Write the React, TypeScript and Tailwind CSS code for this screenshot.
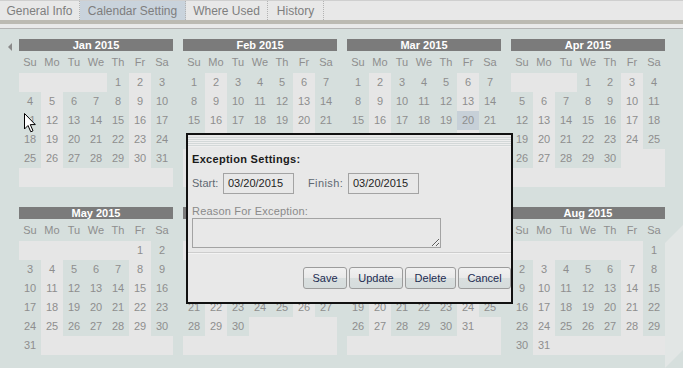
import React from "react";

const MONTHS = ["Jan", "Feb", "Mar", "Apr", "May", "Jun", "Jul", "Aug"];
const DAY_NAMES = ["Su", "Mo", "Tu", "We", "Th", "Fr", "Sa"];
const TABS = [
  { label: "General Info", w: "w-[80px]", active: false },
  { label: "Calendar Setting", w: "w-[106px]", active: true },
  { label: "Where Used", w: "w-[82px]", active: false },
  { label: "History", w: "w-[56px]", active: false },
];

function Month({ m }: { m: number }) {
  const first = new Date(2015, m, 1).getDay();
  const days = new Date(2015, m + 1, 0).getDate();
  // always 6 rows of 7
  const cells = Array.from({ length: 42 }, (_, i) => {
    const d = i - first + 1;
    return d >= 1 && d <= days ? d : null;
  });

  return (
    <div className="w-[154px]">
      <div className="h-[12px] bg-[#7b7b7b] text-center text-[11px] font-bold leading-[12px] text-white">
        {MONTHS[m]} 2015
      </div>
      <div className="grid h-[22px] grid-cols-7 text-center text-[11px] leading-[22px] text-[#8e8e8e]">
        {DAY_NAMES.map((n) => (
          <div key={n}>{n}</div>
        ))}
      </div>
      <div className="grid grid-cols-7">
        {cells.map((d, i) => {
          const col = i % 7;
          const selected = m === 2 && d === 20;
          let bg = "";
          if (selected) bg = "bg-[#c7d0d8]";
          else if (d === null || col === 1 || col === 5) bg = "bg-[#e6e6e6]";
          return (
            <div
              key={i}
              className={`h-[19px] text-center text-[11px] leading-[19px] text-[#8e8e8e] ${bg}`}
            >
              {d ?? ""}
            </div>
          );
        })}
      </div>
    </div>
  );
}

function Btn({ label, w }: { label: string; w: string }) {
  return (
    <button
      type="button"
      className={`${w} h-[22px] rounded-[3px] border border-[#9c9c9c] bg-[linear-gradient(to_bottom,#f1f1f1_0%,#e9e9e9_50%,#d9dfdf_51%,#d6dcdc_100%)] text-center text-[11px] leading-[20px] text-[#1d2c52]`}
    >
      {label}
    </button>
  );
}

export default function App(): JSX.Element {
  return (
    <div className="relative h-[368px] w-[683px] overflow-hidden bg-[#d6dfdd] font-['Liberation_Sans',Arial,sans-serif]">
      {/* faded watermark shape, bottom right */}
      <svg
        className="absolute left-[665px] top-[225px]"
        width="18"
        height="143"
        viewBox="0 0 18 143"
      >
        <polygon points="0,18 18,0 18,125 0,143" fill="#e2e6e5" />
      </svg>

      {/* tabs */}
      <div className="flex h-[20px] border-t border-[#cfcfcf] bg-[#e8e8e8]">
        {TABS.map((t) => (
          <div
            key={t.label}
            className={`${t.w} flex h-full items-center justify-center border-r border-dotted border-[#b3b3b3] text-[12px] text-[#7e7e7e] ${
              t.active ? "bg-[#c9d3dc]" : ""
            }`}
          >
            {t.label}
          </div>
        ))}
      </div>
      <div className="h-[4px] bg-[#bcbab2]" />
      <div className="h-[4px] bg-[#e9e9e9]" />
      <div className="h-[1px] bg-[#b4b4b4]" />

      {/* calendars */}
      <div className="relative flex pt-[10px]">
        <div className="w-[19px]">
          <div className="ml-[8px] mt-[4px] h-0 w-0 border-y-[4px] border-r-[4px] border-y-transparent border-r-[#8a8a8a]" />
        </div>
        <div className="grid grid-cols-[repeat(4,154px)] gap-x-[10px] gap-y-[20px]">
          {MONTHS.map((_, m) => (
            <Month key={m} m={m} />
          ))}
        </div>
      </div>

      {/* exception dialog */}
      <div className="absolute left-[186px] top-[133px] flex h-[171px] w-[327px] flex-col border-2 border-[#111] bg-[#e8e8e8]">
        <div className="mt-[2px] h-[10px] bg-[repeating-linear-gradient(to_bottom,#d3d8d8_0px,#d3d8d8_1px,#eeeeee_1px,#eeeeee_2px)]" />
        <div className="mt-[5px] pl-[4px] text-[11px] font-bold leading-[14px] tracking-[0.3px] text-[#1b1b1b]">
          Exception Settings:
        </div>
        <div className="mt-[7px] flex h-[21px] items-center pl-[4px] text-[11px]">
          <span className="w-[31px] text-[#5f6872]">Start:</span>
          <div className="h-[21px] w-[71px] border border-[#a3a3a3] pl-[4px] leading-[19px] text-[#1e1e1e]">
            03/20/2015
          </div>
          <span className="ml-[14px] w-[40px] tracking-[0.4px] text-[#5f6872]">Finish:</span>
          <div className="h-[21px] w-[71px] border border-[#a3a3a3] pl-[4px] leading-[19px] text-[#1e1e1e]">
            03/20/2015
          </div>
        </div>
        <div className="mt-[11px] pl-[4px] text-[11px] leading-[13px] tracking-[0.2px] text-[#8a8a8a]">
          Reason For Exception:
        </div>
        <div className="pl-[4px]">
          <textarea className="block h-[30px] w-[249px] border border-[#a3a3a3] bg-[#e8e8e8] outline-none" />
        </div>
        <div className="mt-[4px] h-[1px] bg-[#cdcdcd]" />
        <div className="h-[1px] bg-[#f3f3f3]" />
        <div className="mt-[13px] flex justify-end gap-[2px] pr-[0px]">
          <Btn label="Save" w="w-[44px]" />
          <Btn label="Update" w="w-[54px]" />
          <Btn label="Delete" w="w-[51px]" />
          <Btn label="Cancel" w="w-[53px]" />
        </div>
      </div>

      {/* mouse pointer */}
      <svg
        className="absolute left-[24px] top-[113px]"
        width="13"
        height="20"
        viewBox="0 0 13 20"
      >
        <path
          d="M0.5 0.5 L0.5 16 L4 12.5 L6.8 18.8 L9 17.8 L6.3 11.6 L11.3 11.6 Z"
          fill="#fff"
          stroke="#000"
          strokeWidth="1"
          strokeLinejoin="miter"
        />
      </svg>
    </div>
  );
}
